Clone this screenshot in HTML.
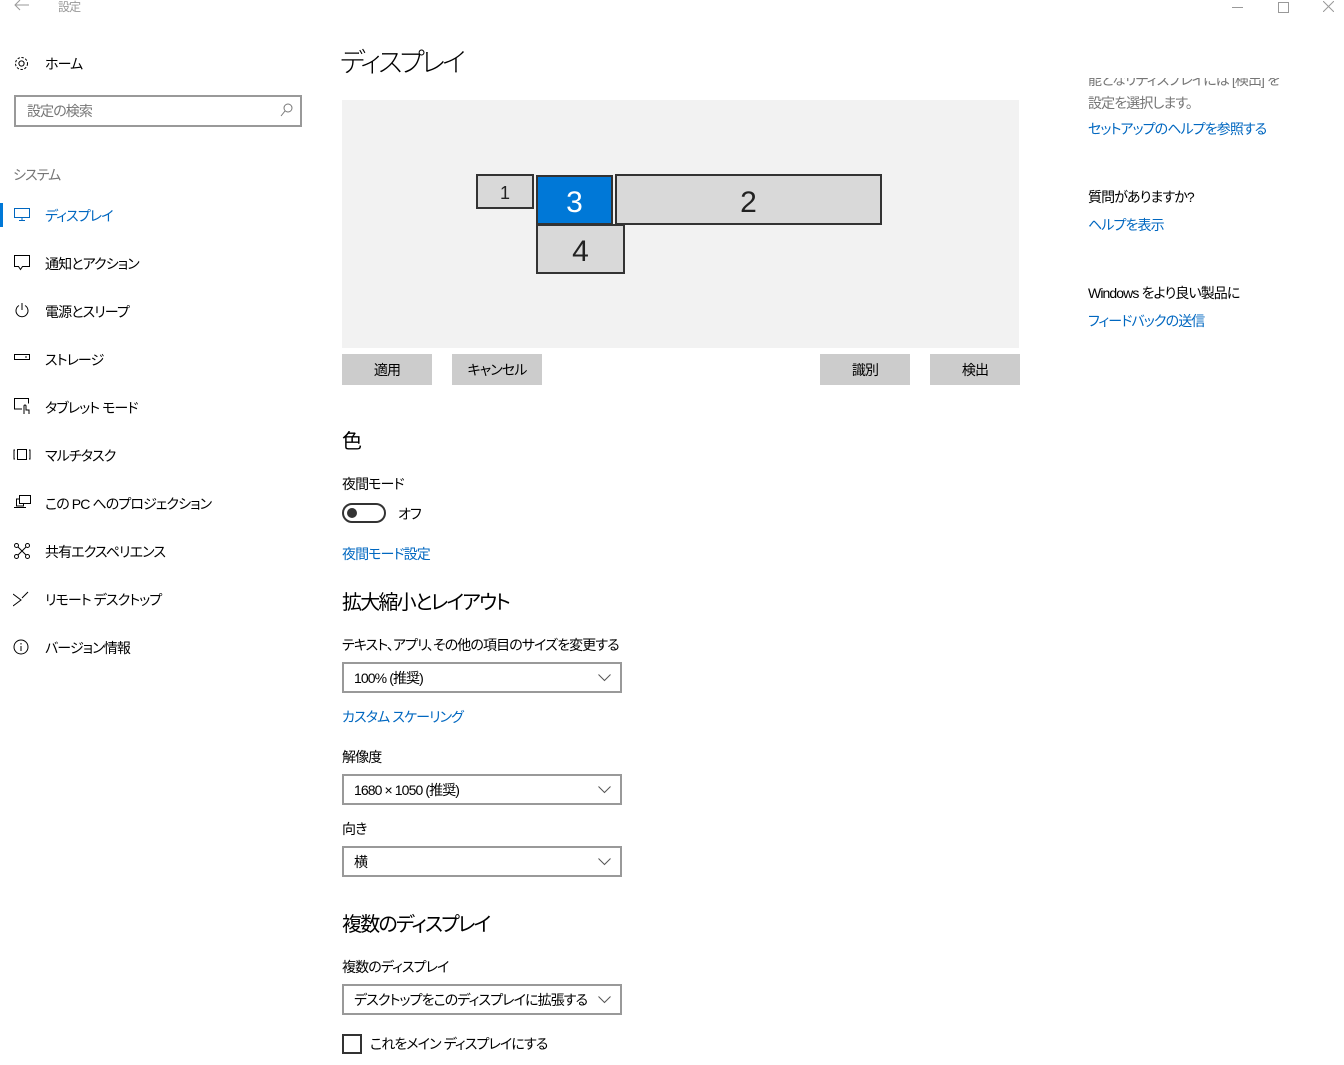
<!DOCTYPE html>
<html><head><meta charset="utf-8"><style>
body{margin:0;width:1344px;height:1065px;background:#fff;position:relative;overflow:hidden;font-family:"Liberation Sans","Noto Sans CJK JP",sans-serif;color:#000;font-feature-settings:"palt"}
.t{position:absolute;white-space:nowrap;line-height:1;font-size:14px;margin-top:1px;letter-spacing:-0.9px}
.h{font-size:20px;letter-spacing:-1.8px}
.b{color:#0067c0}
.g{color:#767676}
.ic{position:absolute}
.btn{position:absolute;top:354px;height:31px;width:90px;background:#ccc;font-size:14px;line-height:33px;text-align:center;letter-spacing:-0.9px}
.dd{position:absolute;left:342px;height:27px;border:2px solid #999;font-size:14px;line-height:29px;padding-left:10px;box-sizing:content-box;width:266px;white-space:nowrap;overflow:hidden;letter-spacing:-0.9px}
.dd svg{position:absolute;right:9px;top:10px}
.mon{position:absolute;box-sizing:border-box;border:2px solid #333;background:#d9d9d9;text-align:center;color:#222;font-weight:300}
</style></head><body>
<svg class="ic" style="left:14px;top:0" width="16" height="12"><path d="M1 5h14M6 0L1 5l5 5" stroke="#999" fill="none" stroke-width="1"/></svg>
<div class="t g" style="left:58px;top:0;font-size:12px;color:#999">設定</div>
<div class="ic" style="left:1232px;top:7px;width:11px;height:1px;background:#999"></div>
<div class="ic" style="left:1278px;top:2px;width:9px;height:9px;border:1px solid #999"></div>
<svg class="ic" style="left:1323px;top:1px" width="11" height="11"><path d="M0 0L11 11M11 0L0 11" stroke="#999"/></svg>

<svg class="ic" style="left:13px;top:55px" width="17" height="17" viewBox="0 0 17 17"><circle cx="8.5" cy="8.5" r="2.6" fill="none" stroke="#000"/><circle cx="8.5" cy="8.5" r="6" fill="none" stroke="#000" stroke-dasharray="2.4 1.6"/></svg>
<div class="t" style="left:45px;top:56px">ホーム</div>
<div class="ic" style="left:14px;top:95px;width:284px;height:28px;border:2px solid #999"></div>
<div class="t g" style="left:27px;top:103px">設定の検索</div>
<svg class="ic" style="left:280px;top:103px" width="13" height="14"><circle cx="8" cy="5" r="4" fill="none" stroke="#777"/><path d="M5 8L1 13" stroke="#777"/></svg>
<div class="t g" style="left:13px;top:167px">システム</div>
<div class="ic" style="left:0;top:203px;width:3px;height:24px;background:#0078d7"></div>
<svg class="ic" style="left:14px;top:208px" width="16" height="13"><rect x="0.5" y="0.5" width="15" height="9" fill="none" stroke="#0067c0"/><path d="M8 10v2M5 12.5h6" stroke="#0067c0"/></svg>
<div class="t b" style="left:45px;top:208px">ディスプレイ</div>
<svg class="ic" style="left:14px;top:255px" width="17" height="16"><path d="M0.5 0.5h15v11h-7l-2 3-2-3h-4z" fill="none" stroke="#000"/></svg>
<div class="t" style="left:45px;top:256px">通知とアクション</div>
<svg class="ic" style="left:14px;top:302px" width="16" height="16"><path d="M5 3.5A6 6 0 1 0 11 3.5" fill="none" stroke="#000"/><path d="M8 1v7" stroke="#000"/></svg>
<div class="t" style="left:45px;top:304px">電源とスリープ</div>
<svg class="ic" style="left:14px;top:354px" width="17" height="8"><rect x="0.5" y="0.5" width="15" height="5" fill="none" stroke="#000"/><path d="M11 3h2" stroke="#000"/></svg>
<div class="t" style="left:45px;top:352px">ストレージ</div>
<svg class="ic" style="left:14px;top:398px" width="18" height="17"><path d="M8 11H0.5V0.5h14v5" fill="none" stroke="#000"/><path d="M10 16v-8a1 1 0 0 1 2 0v4h3v4" fill="none" stroke="#000"/></svg>
<div class="t" style="left:45px;top:400px">タブレット モード</div>
<svg class="ic" style="left:13px;top:449px" width="18" height="12"><path d="M2 1h-1v9h1M16 1h1v9h-1" fill="none" stroke="#000"/><rect x="4.5" y="0.5" width="9" height="10" fill="none" stroke="#000"/></svg>
<div class="t" style="left:45px;top:448px">マルチタスク</div>
<svg class="ic" style="left:14px;top:495px" width="18" height="14"><rect x="5.5" y="0.5" width="11" height="8" fill="none" stroke="#000"/><path d="M5 4H2.5v7h7V9M0 12.5h12" fill="none" stroke="#000"/></svg>
<div class="t" style="left:45px;top:496px">この PC へのプロジェクション</div>
<svg class="ic" style="left:14px;top:543px" width="16" height="16"><circle cx="2.5" cy="2.5" r="2" fill="none" stroke="#000"/><circle cx="13.5" cy="2.5" r="2" fill="none" stroke="#000"/><circle cx="2.5" cy="13.5" r="2" fill="none" stroke="#000"/><circle cx="13.5" cy="13.5" r="2" fill="none" stroke="#000"/><path d="M4 4l8 8M12 4l-8 8" stroke="#000"/></svg>
<div class="t" style="left:45px;top:544px">共有エクスペリエンス</div>
<svg class="ic" style="left:13px;top:591px" width="16" height="16"><path d="M0 3l8 6-8 6M15 1L9 7" fill="none" stroke="#000"/></svg>
<div class="t" style="left:45px;top:592px">リモート デスクトップ</div>
<svg class="ic" style="left:13px;top:639px" width="16" height="16"><circle cx="8" cy="8" r="7" fill="none" stroke="#000"/><path d="M8 7v5M8 4v1.5" stroke="#000"/></svg>
<div class="t" style="left:45px;top:640px">バージョン情報</div>

<div class="t" style="left:340px;top:49px;font-size:27px;font-weight:300;letter-spacing:-3px">ディスプレイ</div>
<div class="ic" style="left:342px;top:100px;width:677px;height:248px;background:#f2f2f2"></div>
<div class="mon" style="left:476px;top:174px;width:58px;height:35px;font-size:18px;line-height:35px">1</div>
<div class="mon" style="left:536px;top:175px;width:77px;height:50px;background:#0078d7;color:#fff;font-size:30px;line-height:52px">3</div>
<div class="mon" style="left:615px;top:174px;width:267px;height:51px;font-size:30px;line-height:53px">2</div>
<div class="mon" style="left:536px;top:224px;width:89px;height:50px;font-size:30px;line-height:52px">4</div>
<div class="btn" style="left:342px">適用</div>
<div class="btn" style="left:452px">キャンセル</div>
<div class="btn" style="left:820px">識別</div>
<div class="btn" style="left:930px">検出</div>

<div class="t h" style="left:342px;top:431px">色</div>
<div class="t" style="left:342px;top:476px">夜間モード</div>
<div class="ic" style="left:342px;top:503px;width:40px;height:16px;border:2px solid #333;border-radius:10px"></div>
<div class="ic" style="left:347px;top:508px;width:10px;height:10px;border-radius:5px;background:#333"></div>
<div class="t" style="left:398px;top:506px">オフ</div>
<div class="t b" style="left:342px;top:546px">夜間モード設定</div>
<div class="t h" style="left:342px;top:592px">拡大縮小とレイアウト</div>
<div class="t" style="left:342px;top:637px">テキスト、アプリ、その他の項目のサイズを変更する</div>
<div class="dd" style="top:662px">100% (推奨)<svg width="13" height="8"><path d="M0.5 0.5l6 6 6-6" fill="none" stroke="#555"/></svg></div>
<div class="t b" style="left:342px;top:709px">カスタム スケーリング</div>
<div class="t" style="left:342px;top:749px">解像度</div>
<div class="dd" style="top:774px">1680 × 1050 (推奨)<svg width="13" height="8"><path d="M0.5 0.5l6 6 6-6" fill="none" stroke="#555"/></svg></div>
<div class="t" style="left:342px;top:821px">向き</div>
<div class="dd" style="top:846px">横<svg width="13" height="8"><path d="M0.5 0.5l6 6 6-6" fill="none" stroke="#555"/></svg></div>
<div class="t h" style="left:342px;top:914px">複数のディスプレイ</div>
<div class="t" style="left:342px;top:959px">複数のディスプレイ</div>
<div class="dd" style="top:984px">デスクトップをこのディスプレイに拡張する<svg width="13" height="8" style="background:#fff"><path d="M0.5 0.5l6 6 6-6" fill="none" stroke="#555"/></svg></div>
<div class="ic" style="left:342px;top:1034px;width:16px;height:16px;border:2px solid #333"></div>
<div class="t" style="left:370px;top:1036px">これをメイン ディスプレイにする</div>

<div class="ic" style="left:1088px;top:78px;width:240px;height:10px;overflow:hidden"><div class="t g" style="left:0;top:-6px">能となリディスプレイには [検出] を</div></div>
<div class="t g" style="left:1088px;top:95px">設定を選択します。</div>
<div class="t b" style="left:1088px;top:121px">セットアップのヘルプを参照する</div>
<div class="t" style="left:1088px;top:189px">質問がありますか?</div>
<div class="t b" style="left:1088px;top:217px">ヘルプを表示</div>
<div class="t" style="left:1088px;top:285px">Windows をより良い製品に</div>
<div class="t b" style="left:1088px;top:313px">フィードバックの送信</div>
</body></html>
